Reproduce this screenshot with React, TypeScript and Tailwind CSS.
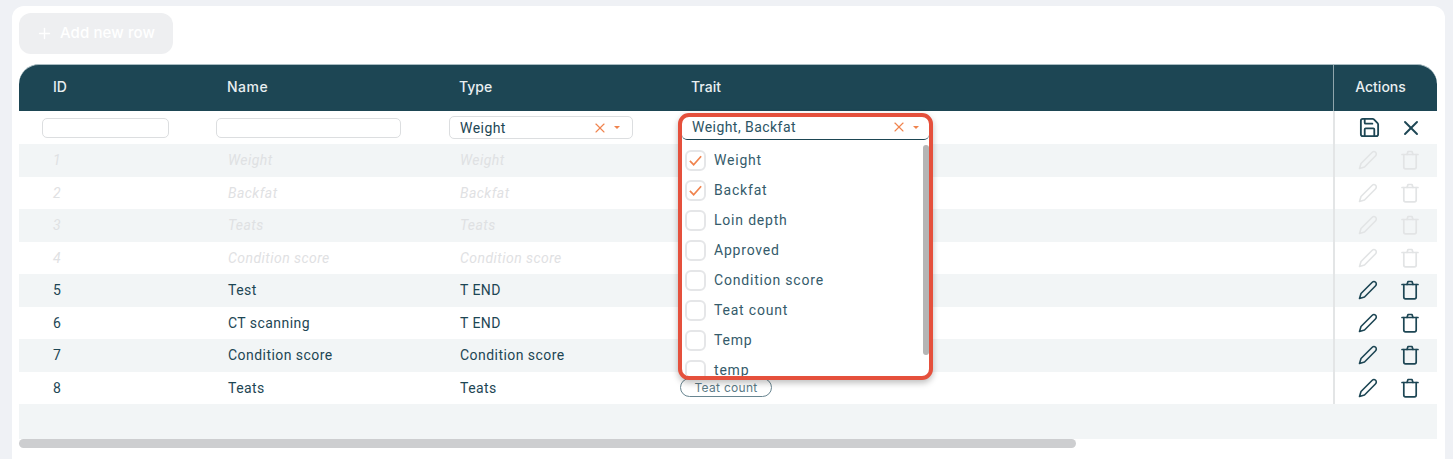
import { Plus, Save, X } from "lucide-react"

const rows = [
  { id: "1", name: "Weight", type: "Weight", faded: true },
  { id: "2", name: "Backfat", type: "Backfat", faded: true },
  { id: "3", name: "Teats", type: "Teats", faded: true },
  { id: "4", name: "Condition score", type: "Condition score", faded: true },
  { id: "5", name: "Test", type: "T END", faded: false },
  { id: "6", name: "CT scanning", type: "T END", faded: false },
  { id: "7", name: "Condition score", type: "Condition score", faded: false },
  { id: "8", name: "Teats", type: "Teats", faded: false, trait: "Teat count" },
]

const options = [
  { label: "Weight", checked: true },
  { label: "Backfat", checked: true },
  { label: "Loin depth" },
  { label: "Approved" },
  { label: "Condition score" },
  { label: "Teat count" },
  { label: "Temp" },
  { label: "temp" },
]

function PenIcon({ className }: { className: string }) {
  return (
    <svg viewBox="0 0 20 20" fill="none" stroke="currentColor" strokeWidth="1.6" strokeLinejoin="round" className={className}>
      <path d="M1.5 18.5 L3 13.5 L14 2.5 C15 1.5 16.5 1.2 17.6 2.3 C18.7 3.4 18.4 5 17.4 6 L6.5 17 Z" />
    </svg>
  )
}

function TrashIcon({ className }: { className: string }) {
  return (
    <svg viewBox="0 0 18 20" fill="none" stroke="currentColor" strokeWidth="1.7" strokeLinejoin="round" strokeLinecap="round" className={className}>
      <path d="M1 4.5 H17" />
      <path d="M6 4.5 L7 1.5 H11 L12 4.5" />
      <path d="M2.8 4.5 V17 C2.8 18 3.5 18.8 4.5 18.8 H13.5 C14.5 18.8 15.2 18 15.2 17 V4.5" />
    </svg>
  )
}

function CaretX() {
  return (
    <div className="flex items-center gap-[6px] text-[#f0834d]">
      <X className="h-[16px] w-[16px]" strokeWidth={1.7} />
      <div className="h-0 w-0 border-x-[3.5px] border-t-[3px] border-x-transparent border-t-[#f0834d]" />
    </div>
  )
}

export default function App() {
  return (
    <div className="h-[459px] w-[1453px] overflow-hidden bg-[#eff1f5] pl-3 pr-2 pt-[6px] font-['Roboto',sans-serif] text-[14px] tracking-[0.45px] text-[#1d4654]">
      <div className="relative h-[453px] rounded-t-xl bg-white pl-[7px] pr-2 pt-[7px]">
        <button className="flex h-[41px] w-[154px] items-center gap-[7px] rounded-xl bg-[#eeeff1] pl-[17px] font-['Inter',sans-serif] text-[15px] font-medium tracking-[0.1px] text-white">
          <Plus className="h-[17px] w-[17px]" strokeWidth={2} />
          Add new row
        </button>

        <div className="mt-[10px] flex h-[47px] items-center rounded-t-[20px] border-t border-[#a9bcc2] bg-[#1d4654] font-['Inter',sans-serif] text-[14px] font-medium tracking-normal text-[#e9eff1]">
          <div className="w-[174px] pb-[3px] pl-[34px]">ID</div>
          <div className="w-[233px] pb-[3px] pl-[34px] tracking-[0.5px]">Name</div>
          <div className="w-[231px] pb-[3px] pl-[33px]">Type</div>
          <div className="w-[676px] pb-[3px] pl-[34px]">Trait</div>
          <div className="flex h-full w-[104px] items-center justify-center border-l border-[#8fa5ac] pb-[3px] pr-[10px]">Actions</div>
        </div>

        <div className="flex h-[33px] items-center">
          <div className="w-[174px] pl-[23px]">
            <div className="h-[20px] w-[127px] rounded-[5px] border-[1.5px] border-[#dcdee0] bg-white" />
          </div>
          <div className="w-[233px] pl-[23px]">
            <div className="h-[20px] w-[185px] rounded-[5px] border-[1.5px] border-[#dcdee0] bg-white" />
          </div>
          <div className="w-[231px] pl-[23px]">
            <div className="flex h-[23px] w-[184px] items-center justify-between rounded-[5px] border-[1.5px] border-[#dcdee0] pl-[10px] pr-[12px]">
              <span className="pt-[1px]">Weight</span>
              <CaretX />
            </div>
          </div>
          <div className="w-[676px]" />
          <div className="flex h-full w-[104px] items-center gap-[18px] border-l-2 border-[#e3e5e6] pl-[23px]">
            <Save className="h-[23px] w-[23px]" strokeWidth={1.9} />
            <X className="h-[24px] w-[24px]" strokeWidth={1.9} />
          </div>
        </div>

        {rows.map((row, i) => (
          <div key={row.id} className={`flex h-[32.5px] items-center ${i % 2 === 0 ? "bg-[#f2f5f6]" : "bg-white"}`}>
            <div className={`w-[174px] pl-[34px] pt-[1px] ${row.faded ? "italic text-[#dfe1e3]" : ""}`}>{row.id}</div>
            <div className={`w-[233px] pl-[35px] pt-[1px] ${row.faded ? "italic text-[#dfe1e3]" : ""}`}>{row.name}</div>
            <div className={`w-[231px] pl-[34px] pt-[1px] ${row.faded ? "italic text-[#dfe1e3]" : ""}`}>{row.type}</div>
            <div className="w-[676px] pl-[23px]">
              {row.trait && (
                <span className="flex h-[19px] w-[92px] items-center justify-center rounded-full border-[1.5px] border-[#688590] font-['Inter',sans-serif] text-[12px] leading-none tracking-[0.3px] text-[#5b7a86]">
                  {row.trait}
                </span>
              )}
            </div>
            <div className={`flex h-full w-[104px] items-center gap-[23px] border-l-2 border-[#e3e5e6] pl-[23px] ${row.faded ? "text-[#e2e4e5]" : ""}`}>
              <PenIcon className="h-[20px] w-[20px]" />
              <TrashIcon className="h-[20px] w-[18px]" />
            </div>
          </div>
        ))}

        <div className="h-[35px] bg-[#f2f5f6]" />
        <div className="h-[9px] w-[1057px] rounded-full bg-[#cdced0]" />

        <div className="absolute left-[666px] top-[107px] h-[267px] w-[255px] overflow-hidden rounded-[11px] border-4 border-[#e5503c] bg-white shadow-[0_3px_6px_rgba(0,0,0,0.25)]">
          <div className="flex h-[23px] items-center justify-between rounded-b-[5px] border-b border-[#1d4654] pb-[2px] pl-[10px] pr-[10px] text-[#2c5464]">
            <span>Weight, Backfat</span>
            <CaretX />
          </div>
          <div className="relative h-[236px] overflow-hidden pl-[3px] pt-[5px] text-[#355b6b]">
            {options.map((opt) => (
              <div key={opt.label} className="flex h-[30.1px] items-center gap-[8px]">
                <div className="flex h-[21px] w-[21px] shrink-0 items-center justify-center rounded-[6px] border-2 border-[#e5e6e8]">
                  {opt.checked && (
                    <svg viewBox="0 0 16 16" fill="none" stroke="#f0834d" strokeWidth="1.8" className="h-[15px] w-[15px]">
                      <path d="M2 8.5 L6 12.5 L14 3.5" />
                    </svg>
                  )}
                </div>
                <span className="tracking-[0.8px]">{opt.label}</span>
              </div>
            ))}
            <div className="absolute right-0 top-[5px] h-[210px] w-[6px] rounded-full bg-[#b5b5b5]" />
          </div>
        </div>
      </div>
    </div>
  )
}
